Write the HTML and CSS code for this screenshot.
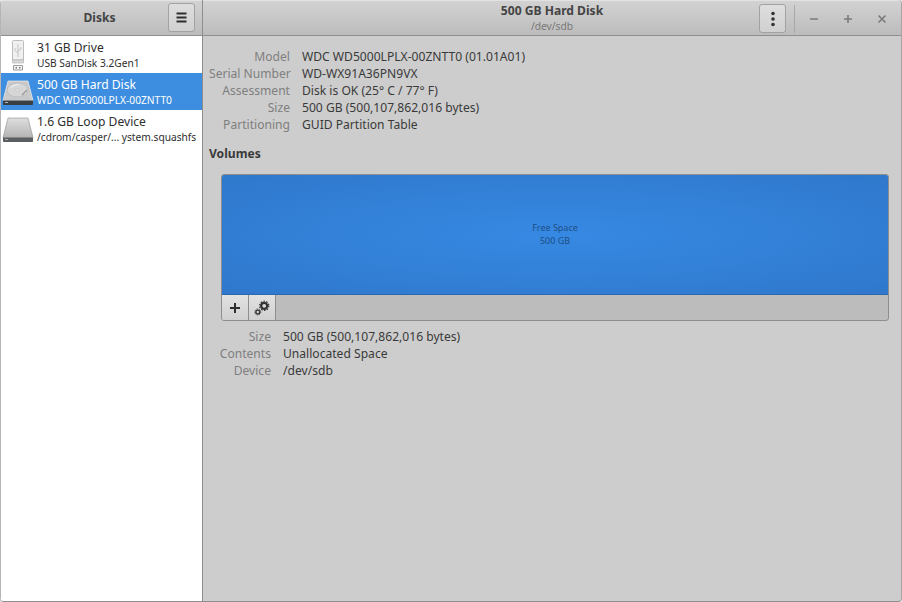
FILE: index.html
```html
<!DOCTYPE html>
<html lang="en">
<head>
<meta charset="utf-8">
<title>Disks</title>
<link rel="stylesheet" href="styles.css">
</head>
<body>
<div class="window">
  <aside class="sidebar">
    <header class="side-head">
      <span class="side-title">Disks</span>
      <button class="btn menu-btn" aria-label="Menu">
        <svg width="11" height="11" viewBox="0 0 11 11"><path d="M.5 .5h10v2H.5zM.5 4.500h10v2H.5zM.5 8.500h10v2H.5z" fill="#2e2e2e"/></svg>
      </button>
    </header>
    <div class="drive-list">
      <div class="drive">
        <svg class="drive-icon" width="32" height="32" viewBox="0 0 32 32">
          <path d="M11.500 1.500h9a1 1 0 0 1 1 1V21h-11V2.500a1 1 0 0 1 1-1z" fill="#f0f0f0" stroke="#bdbdbd"/>
          <path d="M10.500 21h11v3h-11z" fill="#d9d9d9" stroke="#b0b0b0" stroke-width=".6"/>
          <path d="M11.500 26.500h9v4.500h-9z" fill="#f4f4f4" stroke="#9a9a9a"/>
          <path d="M13.500 28h1.500v1.500h-1.500zM17 28h1.500v1.500H17z" fill="#777"/>
          <path d="M16 5v13M16 14l-3-2.500V9M16 12l3-2V8" fill="none" stroke="#c4c4c4"/>
        </svg>
        <div class="drive-text"><div class="name">31 GB Drive</div><div class="sub">USB SanDisk 3.2Gen1</div></div>
      </div>
      <div class="drive selected">
        <svg class="drive-icon" width="32" height="32" viewBox="0 0 32 32">
          <path d="M6 5h20l5 19.500H1z" fill="#c9c9c9" stroke="#eeeeee" stroke-width=".7"/>
          <ellipse cx="15.500" cy="14" rx="10.500" ry="7" fill="#d6d6d6" stroke="#b4b4b4" stroke-width=".6"/>
          <path d="M9 12c2-3 5-3.500 8-3.500" fill="none" stroke="#f0f0f0" stroke-width="1.200"/>
          <ellipse cx="15.500" cy="14" rx="2" ry="1.200" fill="#ececec" stroke="#b0b0b0" stroke-width=".5"/>
          <path d="M20 19l5-5" fill="none" stroke="#9a9a9a" stroke-width="1.200"/>
          <path d="M1 24.500h30v3.700a.8.8 0 0 1-.8.8H1.800a.8.8 0 0 1-.8-.8z" fill="#3a3f44"/>
          <path d="M3 26h3v1H3z" fill="#aeb4b9"/>
        </svg>
        <div class="drive-text"><div class="name">500 GB Hard Disk</div><div class="sub">WDC WD5000LPLX-00ZNTT0</div></div>
      </div>
      <div class="drive">
        <svg class="drive-icon" width="32" height="32" viewBox="0 0 32 32">
          <defs><linearGradient id="loopfill" x1="0" y1="0" x2="0" y2="1"><stop offset="0" stop-color="#dedede"/><stop offset="1" stop-color="#b4b4b4"/></linearGradient></defs>
          <path d="M6 5h20l5 19.500H1z" fill="url(#loopfill)" stroke="#8f8f8f" stroke-width=".6"/>
          <path d="M1 24.500h30v3.700a.8.8 0 0 1-.8.8H1.800a.8.8 0 0 1-.8-.8z" fill="#5b5f62"/>
          <path d="M3 26h3v1H3z" fill="#a9adb0"/>
        </svg>
        <div class="drive-text"><div class="name">1.6 GB Loop Device</div><div class="sub">/cdrom/casper/... ystem.squashfs</div></div>
      </div>
    </div>
  </aside>
  <main class="content">
    <header class="main-head">
      <div class="main-title"><div class="title">500 GB Hard Disk</div><div class="subtitle">/dev/sdb</div></div>
      <div class="head-controls">
        <button class="btn dots-btn" aria-label="Drive options">
          <svg width="4" height="16" viewBox="0 0 4 16"><circle cx="2" cy="2.500" r="1.800" fill="#333"/><circle cx="2" cy="8" r="1.800" fill="#333"/><circle cx="2" cy="13.500" r="1.800" fill="#333"/></svg>
        </button>
        <span class="sep"></span>
        <div class="wm">
          <svg width="10" height="10" viewBox="0 0 10 10"><path d="M1 4.200h8v1.600H1z" fill="#7b7b7b"/></svg>
          <svg width="10" height="10" viewBox="0 0 10 10"><path d="M1 4.200h8v1.600H1zM4.200 1h1.600v8H4.200z" fill="#7b7b7b"/></svg>
          <svg width="10" height="10" viewBox="0 0 10 10"><path d="M1.500 1.500l7 7M8.500 1.500l-7 7" stroke="#7b7b7b" stroke-width="1.700" fill="none"/></svg>
        </div>
      </div>
    </header>
    <section class="body">
      <dl class="props">
        <dt>Model</dt><dd>WDC WD5000LPLX-00ZNTT0 (01.01A01)</dd>
        <dt>Serial Number</dt><dd>WD-WX91A36PN9VX</dd>
        <dt>Assessment</dt><dd>Disk is OK (25° C / 77° F)</dd>
        <dt>Size</dt><dd>500 GB (500,107,862,016 bytes)</dd>
        <dt>Partitioning</dt><dd>GUID Partition Table</dd>
      </dl>
      <h2 class="volumes-title">Volumes</h2>
      <div class="volumes">
        <div class="volume-map"><span>Free Space</span><span>500 GB</span></div>
        <div class="toolbar">
          <button class="tool" aria-label="Create partition">
            <svg width="12" height="12" viewBox="0 0 12 12"><path d="M1 5h10v2H1zM5 1h2v10H5z" fill="#2e2e2e"/></svg>
          </button>
          <button class="tool" aria-label="Additional options">
            <svg width="16" height="16" viewBox="0 0 16 16">
              <circle cx="10.200" cy="5.800" r="3" fill="none" stroke="#333" stroke-width="2.200"/>
              <circle cx="10.200" cy="5.800" r="4.600" fill="none" stroke="#333" stroke-width="1.200" stroke-dasharray="1.500 1.400"/>
              <circle cx="3.800" cy="12" r="1.900" fill="none" stroke="#333" stroke-width="1.400"/>
              <circle cx="3.800" cy="12" r="3" fill="none" stroke="#333" stroke-width=".9" stroke-dasharray="1.100 1"/>
            </svg>
          </button>
        </div>
      </div>
      <dl class="props vol-props">
        <dt>Size</dt><dd>500 GB (500,107,862,016 bytes)</dd>
        <dt>Contents</dt><dd>Unallocated Space</dd>
        <dt>Device</dt><dd>/dev/sdb</dd>
      </dl>
    </section>
  </main>
</div>
</body>
</html>
```
FILE: styles.css
```css
* { box-sizing: border-box; }
html, body { margin: 0; height: 100%; }
body {
  width: 902px;
  height: 602px;
  overflow: hidden;
  font-family: "Noto Sans", sans-serif;
  font-size: 12.100px;
  color: #333;
  background: #e6e6e6;
}
.window {
  display: flex;
  width: 100%;
  height: 100%;
  background: #cdcdcd;
  border-right: 1px solid #a6a6a6;
  border-bottom: 1px solid #8f8f8f;
  border-radius: 4px;
  overflow: hidden;
}

.sidebar {
  width: 203px;
  flex: none;
  display: flex;
  flex-direction: column;
  background: #fff;
  border-right: 1px solid #8e8e8e;
  border-left: 1px solid #b5b5b5;
}
.side-head {
  height: 36px;
  flex: none;
  position: relative;
  display: flex;
  align-items: center;
  justify-content: center;
  padding: 0 4px 2px 0;
  background: linear-gradient(#d2d2d2, #bcbcbc);
  border-top: 1px solid #e2e2e2;
  border-bottom: 1px solid #8e8e8e;
}
.side-title { font-weight: 700; color: #444; }
.btn {
  display: flex;
  align-items: center;
  justify-content: center;
  padding: 0;
  width: 27px;
  height: 29px;
  background: linear-gradient(#dedede, #d0d0d0);
  border: 1px solid #a2a2a2;
  border-radius: 3px;
}
.menu-btn { position: absolute; right: 7px; top: 2px; }
.drive-list { display: flex; flex-direction: column; }
.drive {
  height: 37px;
  display: flex;
  align-items: center;
  gap: 3px;
  padding-left: 1px;
  color: #2e2e2e;
}
.drive.selected { background: #3d8ee0; color: #fff; }
.drive-icon { flex: none; }
.name { font-size: 12.100px; line-height: 17px; }
.sub { font-size: 10.200px; line-height: 14px; white-space: nowrap; }

.content { flex: 1; min-width: 0; display: flex; flex-direction: column; }
.main-head {
  height: 36px;
  flex: none;
  position: relative;
  display: flex;
  justify-content: center;
  background: linear-gradient(#d2d2d2, #bcbcbc);
  border-top: 1px solid #e2e2e2;
  border-bottom: 1px solid #8e8e8e;
}
.main-title { text-align: center; padding-top: 1px; }
.title { font-weight: 700; font-size: 12.100px; line-height: 17px; color: #444; }
.subtitle { font-size: 10.200px; line-height: 14px; color: #777; }
.head-controls {
  position: absolute;
  right: 0;
  top: 0;
  height: 35px;
  display: flex;
  align-items: center;
}
.dots-btn { width: 27px; height: 29px; margin-right: 8px; }
.sep { width: 1px; height: 28px; background: #a8a8a8; margin-right: 14px; }
.wm { display: flex; gap: 24px; padding-right: 14px; }

.body { padding: 12px 12px 0 6px; }
.props {
  margin: 0;
  display: grid;
  grid-template-columns: 81px 1fr;
  column-gap: 12px;
  line-height: 17px;
}
.props dt { text-align: right; color: #7f7f7f; white-space: nowrap; }
.props dd { margin: 0; color: #3a3a3a; }
.volumes-title { margin: 12px 0 12px; font-size: 12.100px; line-height: 17px; font-weight: 700; color: #3a3a3a; }
.volumes {
  margin-left: 12px;
  height: 147px;
  display: flex;
  flex-direction: column;
  background: #bcbcbc;
  border: 1px solid #8e8e8e;
  border-radius: 3px;
  overflow: hidden;
}
.volume-map {
  height: 120px;
  flex: none;
  display: flex;
  flex-direction: column;
  align-items: center;
  justify-content: center;
  font-size: 9px;
  line-height: 12.500px;
  color: #1f4f86;
  background: radial-gradient(ellipse at center, #3689e3 0%, #2f78cc 100%);
  border-bottom: 1px solid #2a68b0;
}
.toolbar { flex: 1; display: flex; }
.tool {
  width: 27px;
  padding: 0;
  display: flex;
  align-items: center;
  justify-content: center;
  background: linear-gradient(#e2e2e2, #d0d0d0);
  border: 0;
  border-right: 1px solid #8e8e8e;
}
.vol-props { grid-template-columns: 56px 1fr; margin: 7px 0 0 6px; column-gap: 12px; }
```
